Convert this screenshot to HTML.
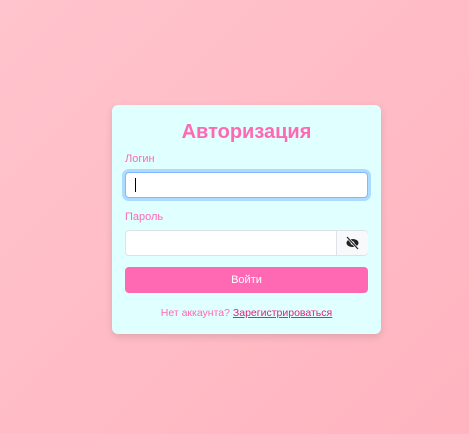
<!DOCTYPE html><html><head><style>
body{margin:0;width:469px;height:434px;background:linear-gradient(135deg,#ffc4cd,#ffb4c0);font-family:"Liberation Sans",sans-serif;position:relative;overflow:hidden}
.card{position:absolute;left:112px;top:105px;width:269px;height:229px;background:#e0ffff;border-radius:6px;box-shadow:0 3px 8px rgba(0,0,0,.12)}
.t{position:absolute;left:0;right:0;top:16px;text-align:center;font-size:20px;font-weight:bold;color:#ff69b4}
.l{position:absolute;left:13px;font-size:11px;color:#ff69b4}
.in{position:absolute;left:13px;width:243px;height:26px;box-sizing:border-box;background:#fff;border:1px solid #dee2e6;border-radius:4px}
.f{border:1px solid #86b7fe;box-shadow:0 0 0 3px rgba(13,110,253,.25)}
.cur{position:absolute;left:9px;top:5px;width:1px;height:14px;background:#000}
.eye{position:absolute;left:224px;top:126px;width:31px;height:24px;border-left:1px solid #dee2e6;background:#f8f9fa;border-radius:0 4px 4px 0}
.b{position:absolute;left:13px;top:162px;width:243px;height:26px;background:#ff69b4;border-radius:4px;color:#fff;font-size:11px;text-align:center;line-height:26px}
.ft{position:absolute;left:0;right:0;top:202px;text-align:center;font-size:10.5px;color:#ff69b4}
.ft u{color:#e0207f}
</style></head><body><div class="card">
<div class="t">Авторизация</div>
<div class="l" style="top:48px">Логин</div>
<div class="in f" style="top:67px"><div class="cur"></div></div>
<div class="l" style="top:106px">Пароль</div>
<div class="in" style="top:125px"></div>
<div class="eye"><svg width="31" height="24" viewBox="0 0 31 24"><ellipse cx="15.5" cy="12" rx="6" ry="4" fill="#222"/><circle cx="15.5" cy="12" r="1.8" fill="#f8f9fa"/><line x1="10" y1="6" x2="21" y2="18" stroke="#f8f9fa" stroke-width="2.5"/><line x1="10" y1="6" x2="21" y2="18" stroke="#222" stroke-width="1.2"/></svg></div>
<div class="b">Войти</div>
<div class="ft">Нет аккаунта? <u>Зарегистрироваться</u></div>
</div></body></html>
